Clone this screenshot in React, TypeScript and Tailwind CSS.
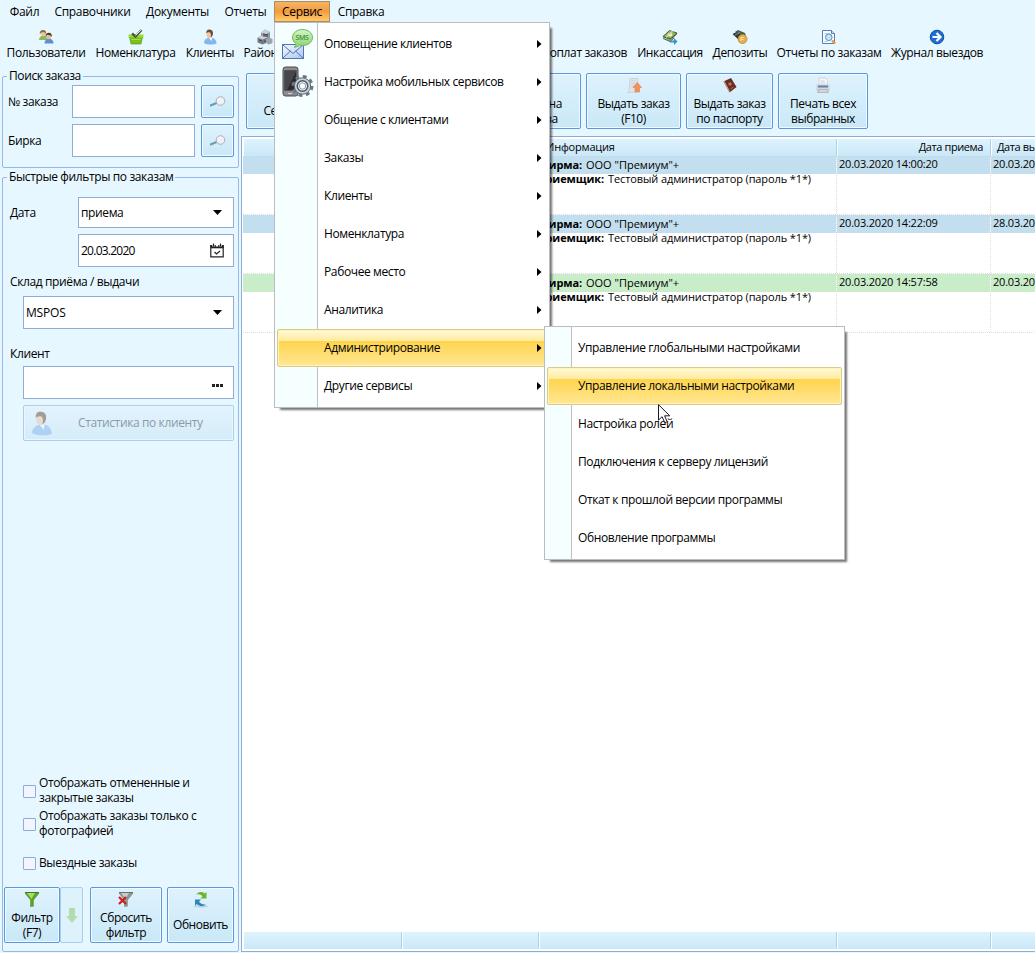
import type { ReactNode } from 'react';
import clsx from 'clsx';

const menuBar = [
  { label: 'Файл', cls: 'w-[45px]' },
  { label: 'Справочники', cls: 'w-[91px]' },
  { label: 'Документы', cls: 'w-[79px]' },
  { label: 'Отчеты', cls: 'w-[57px]' },
  { label: 'Сервис', cls: 'w-14', active: true },
  { label: 'Справка', cls: 'w-[62px]' },
];

const serviceMenu = [
  { label: 'Оповещение клиентов', icon: <SmsIcon /> },
  { label: 'Настройка мобильных сервисов', icon: <PhoneGearIcon /> },
  { label: 'Общение с клиентами' },
  { label: 'Заказы' },
  { label: 'Клиенты' },
  { label: 'Номенклатура' },
  { label: 'Рабочее место' },
  { label: 'Аналитика' },
  { label: 'Администрирование', active: true },
  { label: 'Другие сервисы' },
];

const adminMenu = [
  { label: 'Управление глобальными настройками' },
  { label: 'Управление локальными настройками', active: true },
  { label: 'Настройка ролей' },
  { label: 'Подключения к серверу лицензий' },
  { label: 'Откат к прошлой версии программы' },
  { label: 'Обновление программы' },
];

const orders = [
  { received: '20.03.2020 14:00:20', due: '20.03.2020', tone: 'bg-[#c3deee]' },
  { received: '20.03.2020 14:22:09', due: '28.03.2020', tone: 'bg-[#c3deee]' },
  { received: '20.03.2020 14:57:58', due: '20.03.2020', tone: 'bg-[#c9edc9]' },
];

/* ---------- icons ---------- */

function SmsIcon() {
  return (
    <svg width="32" height="32" viewBox="0 0 32 32">
      <defs>
        <linearGradient id="bubble" x1="0" y1="0" x2="0" y2="1">
          <stop offset="0" stopColor="#d4f5c4" />
          <stop offset="1" stopColor="#86d46c" />
        </linearGradient>
        <linearGradient id="mail" x1="0" y1="0" x2="1" y2="1">
          <stop offset="0" stopColor="#f4f9ff" />
          <stop offset="1" stopColor="#a9c8f0" />
        </linearGradient>
      </defs>
      <rect x="0.5" y="16.5" width="21" height="14" fill="url(#mail)" stroke="#5573b5" />
      <path d="M1 17l10 8.500L21 17M1 30l7.500-7M21 30l-7.500-7" fill="none" stroke="#5573b5" />
      <path d="M20.500 1.500c5.500 0 10 3.500 10 8s-4.500 8-10 8c-1 0-2-.1-3-.4-1.500 1.500-3 2.100-5.500 2.100 1.300-1 1.800-2.300 1.700-3.700-2-1.500-3.200-3.600-3.200-6 0-4.500 4.500-8 10-8z" fill="url(#bubble)" stroke="#68b858" />
      <text x="20" y="12" textAnchor="middle" fontSize="7" fill="#4c8a49" className="font-semibold">SMS</text>
    </svg>
  );
}

function PhoneGearIcon() {
  return (
    <svg width="32" height="32" viewBox="0 0 32 32">
      <rect x="1" y="1" width="15" height="29" rx="2.500" fill="#8d8d90" stroke="#4b4b4d" />
      <rect x="2.500" y="4.500" width="12" height="20" fill="#2b2a2d" />
      <path d="M2.500 4.500h12L5 24.500H2.500z" fill="#47464a" />
      <path d="M6 27.500h4" stroke="#d5d5d8" />
      <circle cx="20.500" cy="20" r="9.300" fill="none" stroke="#6d7884" strokeWidth="3.400" strokeDasharray="3.800 3.504" />
      <circle cx="20.500" cy="20" r="8.200" fill="#c9d1da" stroke="#5d6874" />
      <circle cx="20.500" cy="20" r="5.200" fill="#fafdff" stroke="#4a545f" strokeWidth="1.500" />
      <circle cx="20.500" cy="20" r="3.200" fill="#f6feff" stroke="#8d98a4" />
    </svg>
  );
}

function PersonIcon({ size = 16 }: { size?: number }) {
  return (
    <svg width={size} height={size} viewBox="0 0 16 16">
      <path d="M2 14c0-3 2.500-5 5-5.200l2.500-.3c3 .5 5 3 5 6-2.500 1.500-10 1.500-12.500-.5z" fill="#83b7ee" />
      <path d="M6.500 8.500h3.500l-.5 3.500z" fill="#fff" />
      <ellipse cx="7.500" cy="5.300" rx="3" ry="3.900" fill="#f0c8a3" />
      <path d="M4.300 4.500C4 1.500 5.500.3 7.800.5c2.600.2 3.700 2.300 3 5.200-.5 1.500-1.500 2.500-2.300 2.500C9.300 6.500 9 4.500 8 3.500 6.500 3 5 3.500 4.300 4.500z" fill="#6c4a33" />
    </svg>
  );
}

function UsersIcon() {
  return (
    <svg width="16" height="16" viewBox="0 0 16 16">
      <path d="M1 11c0-3 2-4.500 4.500-4.500S10 8 10 11z" fill="#8db863" />
      <circle cx="5" cy="4.300" r="2.600" fill="#edc79e" />
      <path d="M1.800 5C1.500 2.300 3 1 5.200 1S8.300 2.500 8 5L6.500 3.200H3.400z" fill="#8c6b3b" />
      <path d="M6.500 14.500c0-3 1.800-4.800 4.500-4.800s4.500 1.800 4.500 4.800z" fill="#5d8fcf" />
      <circle cx="10.700" cy="7.500" r="2.700" fill="#e9bc95" />
      <path d="M7.600 7.500C7.300 5 8.800 3.600 11 3.700c2.200.1 3.200 1.700 2.800 4L12 6.200 9.200 5.800z" fill="#4e3c30" />
    </svg>
  );
}

function BasketIcon() {
  return (
    <svg width="16" height="16" viewBox="0 0 16 16">
      <path d="M1.500 8h13L13 15H3z" fill="#7cc01c" stroke="#5b9c15" strokeWidth=".7" />
      <path d="M.5 5.500h15v3H.5z" fill="#9cdc30" />
      <path d="M3.500 10.500h9" stroke="#a5de4d" />
      <path d="M4 4.500l3.500 3L13.500 1" fill="none" stroke="#4c5b3b" strokeWidth="2.400" />
      <path d="M7.500 6.500l5.500-5.500" stroke="#dfe9e0" strokeWidth="1" />
    </svg>
  );
}

function BuildingIcon() {
  return (
    <svg width="16" height="16" viewBox="0 0 16 16">
      <path d="M4 4l4-3.500 5 2.500v8l-9 2z" fill="#8f969e" />
      <path d="M4 4l4-3.500 5 2.500-4 2z" fill="#c9ced4" />
      <path d="M.5 8.500l5-2 5 2v5l-5 2-5-2z" fill="#747c86" />
      <path d="M.5 8.500l5-2 5 2-5 2z" fill="#cdd3da" />
      <path d="M9 10l3-1.500 3.500 1.500v4L12 15.500 9 14z" fill="#9ba3ac" />
      <path d="M6 5l5 1M2 11l3 1M7 12.500l2-.7M6 7h5" stroke="#3f464e" />
    </svg>
  );
}

function CashIcon() {
  return (
    <svg width="16" height="16" viewBox="0 0 16 16">
      <path d="M.5 8L7 2l8.500 2.500L9 11z" fill="#39492f" />
      <path d="M1 9.500l7 3 4-3.500M1 7.500L7.500 1.500 15 4 8.500 10z" fill="#8fb46b" stroke="#3d5230" strokeWidth=".8" />
      <ellipse cx="8" cy="5.800" rx="2.400" ry="1.700" fill="#e9f3d4" />
      <path d="M4 8.300l6.500-6" stroke="#e3d68f" strokeWidth="1.500" />
      <path d="M8 11.500h4V9l3.500 3.500L12 16v-2.500H8z" fill="#3f90d0" />
    </svg>
  );
}

function DepositIcon() {
  return (
    <svg width="16" height="16" viewBox="0 0 16 16">
      <path d="M.5 5l6-3 6.500 4-4 7z" fill="#2f3733" />
      <path d="M3 3l3-2 7 3 1 3z" fill="#4c5c4a" />
      <path d="M3 6l5-2.500" stroke="#8ba27f" />
      <circle cx="10.500" cy="10" r="4.500" fill="#e3b04d" stroke="#b98732" strokeWidth=".8" />
      <path d="M9 12V8.500h3M9 10.500h2.500" fill="none" stroke="#fbe5a4" />
    </svg>
  );
}

function ReportIcon() {
  return (
    <svg width="16" height="16" viewBox="0 0 16 16">
      <path d="M1.500 1.500h9l3 3v10h-12z" fill="#f7fbff" stroke="#5b7cb0" />
      <path d="M10.500 1.500v3h3" fill="#cfdff3" stroke="#5b7cb0" />
      <path d="M3.500 4.500h5M3.500 12.500h3" stroke="#b8cbe4" />
      <circle cx="7.800" cy="8.300" r="3.300" fill="#bfe5f8" stroke="#5d90bb" />
      <path d="M11 11.500l3 3" stroke="#e9924a" strokeWidth="2.400" />
    </svg>
  );
}

function BlueArrowIcon() {
  return (
    <svg width="16" height="16" viewBox="0 0 16 16">
      <circle cx="8" cy="8" r="6.800" fill="#1f6fd2" stroke="#0b4da2" />
      <path d="M3.500 8h8M7.500 4l4 4-4 4" fill="none" stroke="#fff" strokeWidth="2.200" />
    </svg>
  );
}

function GiveOrderIcon() {
  return (
    <svg width="16" height="17" viewBox="0 0 16 17">
      <path d="M4 1.500h8L11 13c-.3 2-1.500 2.500-3 2.500H1.500C3 15 3.200 13 3.300 11z" fill="#dde5ea" stroke="#c2cfd6" strokeWidth=".8" />
      <path d="M5.500 4h4M5.200 6.500h4M5 9h3" stroke="#c9d3da" />
      <path d="M9 15V10.500H7L11.300 5.500 15.500 10.500h-2V15z" fill="#f3925f" stroke="#e27945" strokeWidth=".6" />
    </svg>
  );
}

function PassportIcon() {
  return (
    <svg width="16" height="17" viewBox="0 0 16 17">
      <path d="M1.500 4.500L9 1l5.500 9L7.500 15.500z" fill="#6b2a23" />
      <path d="M1.500 4.500L7.500 15.500l.3-1.500L2.500 4z" fill="#c9a89f" />
      <circle cx="8" cy="7" r="1.800" fill="#b07a4c" />
      <path d="M8.500 12l3-2" stroke="#b07a4c" />
    </svg>
  );
}

function PrinterIcon() {
  return (
    <svg width="16" height="17" viewBox="0 0 16 17">
      <path d="M4 1h6l2.500 2.500V8H4z" fill="#f4f6f8" stroke="#c8d0d7" strokeWidth=".8" />
      <path d="M5.500 4h4M5.500 6h5" stroke="#cfd6dc" />
      <rect x="1" y="7.500" width="14" height="6" rx="1" fill="#d4d8de" />
      <path d="M3 8.500h10v2H3z" fill="#5e83b0" />
      <path d="M3 12h10l.8 4H2.200z" fill="#b4b9c0" />
      <path d="M4 14h8" stroke="#f0f2f4" />
    </svg>
  );
}

function LensIcon() {
  return (
    <svg width="16" height="11" viewBox="0 0 16 11">
      <path d="M.5 9.500l5.500-2.200" stroke="#6a9bb8" strokeWidth="2" strokeLinecap="round" />
      <circle cx="10.500" cy="5" r="4.300" fill="#eef0fa" stroke="#b0adb9" />
      <path d="M8 4.500c.5-1.500 2-2 3.300-1.600" fill="none" stroke="#fff" />
    </svg>
  );
}

function FunnelIcon({ off = false }: { off?: boolean }) {
  return (
    <svg width="16" height="17" viewBox="0 0 16 17">
      <path d="M1 1h14v1.800L9.800 9v6.500L6.200 16V9L1 2.800z" fill={off ? '#8b9590' : '#5ea02c'} />
      <path d="M3 2h8L7.500 8z" fill={off ? '#c5cdc9' : '#a7dc6a'} />
      <path d="M1 1h14v1H1z" fill={off ? '#67706b' : '#3f7a1b'} />
      {off ? <path d="M1 6l7 7M8 6l-7 7" stroke="#cf1c20" strokeWidth="2.200" /> : null}
    </svg>
  );
}

function RefreshIcon() {
  return (
    <svg width="16" height="17" viewBox="0 0 16 17">
      <ellipse cx="8" cy="15.500" rx="7.500" ry="1" fill="#c2d3dc" />
      <path d="M3 3.500C5.500.5 9 .3 11.500 2.500L13.500 1v6.500H7.500L9.500 5.200C7.500 3.300 5 3 3 3.500z" fill="#6fb52c" />
      <path d="M2 8.500h6L6 10.700c1.700 2 4 2.800 7 2.800-2.800 2.500-6.500 2-9.200-.5L2 15z" fill="#2f86b4" />
    </svg>
  );
}

function CalendarIcon() {
  return (
    <svg width="14" height="15" viewBox="0 0 14 15">
      <path d="M.8 2.500h12.400v11.400H.8z" fill="none" stroke="#222" strokeWidth="1.200" />
      <path d="M.5 2h13v3.300H.5z" fill="#222" />
      <path d="M3.500 0v3.500M7 0v3.500M10.500 0v3.500" stroke="#fff" strokeWidth="2.400" />
      <path d="M3.500 .5v3M10.500 .5v3" stroke="#222" strokeWidth="1.200" />
      <path d="M4.500 9l2 2 3.500-3" fill="none" stroke="#222" strokeWidth="1.200" />
    </svg>
  );
}

function CaretDown() {
  return (
    <svg width="9" height="5" viewBox="0 0 9 5">
      <path d="M0 0h9L4.500 5z" fill="#000" />
    </svg>
  );
}

/* ---------- building blocks ---------- */

function ToolItem({ icon, label, cls }: { icon?: ReactNode; label: string; cls: string }) {
  return (
    <div className={clsx('flex shrink-0 flex-col items-center', cls)}>
      <span className="flex h-4 items-center">{icon}</span>
      <span className="h-4 leading-4">{label}</span>
    </div>
  );
}

function PushButton({ icon, lines, cls }: { icon?: ReactNode; lines: string[]; cls: string }) {
  return (
    <button
      className={clsx(
        'flex h-14 shrink-0 flex-col items-center rounded-[2px] border border-[#5b98dc] bg-linear-to-b from-[#dff2fe] to-[#c9e8f7] pt-[3px] tracking-[-0.45px] shadow-[inset_0_0_0_1px_#f0faff]',
        cls,
      )}
    >
      <span className="flex h-[17px]">{icon}</span>
      <span className="flex h-[33px] flex-col justify-center leading-[15px]">
        {lines.map((l) => (
          <span key={l}>{l}</span>
        ))}
      </span>
    </button>
  );
}

function Group({ title, cls, children }: { title: string; cls: string; children: ReactNode }) {
  return (
    <section className={clsx('relative rounded-[2px] border border-[#94b9ea]', cls)}>
      <h2 className="absolute -top-[9px] left-1 bg-[#e7f7ff] px-0.5 leading-4 whitespace-nowrap">{title}</h2>
      {children}
    </section>
  );
}

function SearchRow({ label }: { label: string }) {
  return (
    <div className="flex items-center">
      <span className="w-16 shrink-0">{label}</span>
      <span className="h-[33px] w-[123px] border border-[#8facd9] bg-white" />
      <button className="ml-1.5 grid h-[33px] w-[33px] place-items-center rounded-[2px] border border-[#5b98dc] bg-linear-to-b from-[#dff2fe] to-[#c9e8f7] shadow-[inset_0_0_0_1px_#f0faff]">
        <LensIcon />
      </button>
    </div>
  );
}

function Field({ value, icon, cls }: { value?: string; icon: ReactNode; cls: string }) {
  return (
    <div className={clsx('flex items-center justify-between border border-[#8facd9] bg-white pl-0.5', cls)}>
      <span>{value}</span>
      {icon}
    </div>
  );
}

function Check({ lines, cls }: { lines: string[]; cls?: string }) {
  return (
    <label className={clsx('flex items-center gap-[3px]', cls)}>
      <span className="h-[13px] w-[13px] shrink-0 rounded-[1px] border border-[#8facd9] bg-[#f2f5ff]" />
      <span className="-mt-px mb-px flex flex-col leading-[15px]">
        {lines.map((l) => (
          <span key={l}>{l}</span>
        ))}
      </span>
    </label>
  );
}

type Entry = { label: string; icon?: ReactNode; active?: boolean };

function PopupMenu({ items, cls, gutter, arrows }: { items: Entry[]; cls: string; gutter: string; arrows?: boolean }) {
  return (
    <ul
      className={clsx(
        'absolute border border-[#bcbcbc] bg-white py-0.5 shadow-[4px_4px_2px_-2px_rgba(0,0,0,0.55)]',
        cls,
      )}
    >
      <li aria-hidden="true" className={clsx('absolute inset-y-0 left-0 border-r border-[#c0c0c0] bg-[#f5ffff]', gutter)} />
      {items.map((m) => (
        <li
          key={m.label}
          className={clsx(
            'relative mx-0.5 flex h-[38px] items-center rounded-[2px] border',
            m.active
              ? 'border-[#d9c98c] bg-[linear-gradient(180deg,#fffbd8_0%,#ffeaa0_30%,#ffd44d_31%,#ffe793_100%)] shadow-[inset_0_0_0_1px_#fff3b8]'
              : 'border-transparent',
          )}
        >
          <span className={clsx('shrink-0', arrows ? 'flex w-[46px] pl-1' : 'w-[30px]')}>{m.icon}</span>
          <span className="flex-1 whitespace-nowrap">{m.label}</span>
          {arrows ? (
            <svg width="5" height="8" viewBox="0 0 5 8" className="mr-1">
              <path d="M0 0v8l4.500-4z" fill="#000" />
            </svg>
          ) : null}
        </li>
      ))}
    </ul>
  );
}

/* ---------- page parts ---------- */

function Sidebar() {
  return (
    <aside className="flex w-[241px] shrink-0 flex-col pt-[7px] pl-[2px]">
      <Group title="Поиск заказа" cls="h-[92px] w-[237px] pt-2 pl-[5px]">
        <div className="flex flex-col gap-1.5">
          <SearchRow label="№ заказа" />
          <SearchRow label="Бирка" />
        </div>
      </Group>

      <Group title="Быстрые фильтры по заказам" cls="mt-[9px] flex h-[775px] w-[237px] flex-col">
        <div className="mt-[19px] flex items-center pl-[7px]">
          <span className="w-[68px]">Дата</span>
          <Field value="приема" cls="h-[31px] w-[156px] pr-[11px]" icon={<CaretDown />} />
        </div>
        <Field value="20.03.2020" cls="mt-1.5 ml-[75px] h-[33px] w-[156px] pr-[9px] tracking-[-0.75px]" icon={<CalendarIcon />} />
        <p className="mt-[7px] pl-[7px] leading-4">Склад приёма / выдачи</p>
        <Field value="MSPOS" cls="mt-1.5 ml-5 h-[33px] w-[211px] pr-[11px] tracking-[-0.2px]" icon={<CaretDown />} />
        <p className="mt-[17px] pl-[7px] leading-4">Клиент</p>
        <Field
          cls="mt-1 ml-5 h-[33px] w-[211px] pr-[10px]"
          icon={
            <svg width="11" height="3" viewBox="0 0 11 3" className="mt-[5px]">
              <path d="M0 0h3v3H0zM4 0h3v3H4zM8 0h3v3H8z" fill="#222" />
            </svg>
          }
        />
        <button className="mt-1.5 ml-5 flex h-9 w-[211px] items-center rounded-[2px] border border-[#aaceef] bg-linear-to-b from-[#e2f3fd] to-[#d5ecf9] pl-[5px] text-[#8b9ba6] shadow-[inset_0_0_0_1px_#eaf7fe]">
          <span className="opacity-50">
            <PersonIcon size={25} />
          </span>
          <span className="ml-6">Статистика по клиенту</span>
        </button>

        <div className="mt-auto flex flex-col pl-5">
          <Check lines={['Отображать отмененные и', 'закрытые заказы']} />
          <Check cls="mt-[3px]" lines={['Отображать заказы только с', 'фотографией']} />
          <Check cls="mt-[17px]" lines={['Выездные заказы']} />
        </div>
        <div className="mt-4 mb-2 flex pl-px">
          <PushButton cls="w-14" icon={<FunnelIcon />} lines={['Фильтр', '(F7)']} />
          <button className="grid h-14 w-[23px] place-items-center rounded-[2px] border border-[#aaceef] bg-[#def2fc]">
            <svg width="12" height="15" viewBox="0 0 12 15">
              <path d="M3 0h6v8h3l-6 7-6-7h3z" fill="#b2dcb0" />
            </svg>
          </button>
          <PushButton cls="ml-[7px] w-[72px]" icon={<FunnelIcon off />} lines={['Сбросить', 'фильтр']} />
          <PushButton cls="ml-[5px] w-[67px]" icon={<RefreshIcon />} lines={['Обновить']} />
        </div>
      </Group>
    </aside>
  );
}

function OrdersGrid() {
  const headCell = 'shrink-0 border-r border-[#a9d3e8] bg-linear-to-b from-[#dff3ff] to-[#c9e8f8]';
  return (
    <div className="flex h-[816px] w-[800px] flex-col border border-[#8facd9] bg-white pt-0.5 pl-px text-[11px] tracking-[-0.11px]">
      <div className="ml-px flex h-[17px] leading-[15px] tracking-[-0.4px]">
        <div className={clsx(headCell, 'w-[593px] pl-[302px] tracking-[-0.2px]')}>Информация</div>
        <div className={clsx(headCell, 'w-[154px] border-l border-l-white pr-[7px] text-right')}>Дата приема</div>
        <div className={clsx(headCell, 'w-[120px] border-l border-l-white pl-[5px] whitespace-nowrap')}>Дата выдачи</div>
      </div>
      {orders.map((o) => (
        <div key={o.received} className="flex h-[59px] border-b border-dotted border-[#dcdcdc]">
          <div className="w-[594px] shrink-0 border-r border-dotted border-[#dcdcdc]">
            <p className={clsx('flex h-[18px] leading-[18px]', o.tone)}>
              <b className="w-[339px] text-right">Фирма:</b>
              <span className="ml-1 tracking-normal">ООО "Премиум"+</span>
            </p>
            <p className="-mt-px flex h-3 leading-3">
              <b className="w-[361px] text-right">Приемщик:</b>
              <span className="ml-1">Тестовый администратор (пароль *1*)</span>
            </p>
          </div>
          <div className="w-[154px] shrink-0 border-r border-dotted border-[#dcdcdc]">
            <p className={clsx('h-[18px] pl-0.5 leading-[15px] tracking-[-0.2px]', o.tone)}>{o.received}</p>
          </div>
          <div className="w-[120px] shrink-0">
            <p className={clsx('h-[18px] pl-0.5 leading-[15px] tracking-[-0.2px]', o.tone)}>{o.due}</p>
          </div>
        </div>
      ))}
      <div className="mt-auto mb-0.5 ml-px flex h-[17px]">
        <div className={clsx(headCell, 'w-[158px]')} />
        <div className={clsx(headCell, 'w-[137px] border-l border-l-white')} />
        <div className={clsx(headCell, 'w-[298px] border-l border-l-white')} />
        <div className={clsx(headCell, 'w-[154px] border-l border-l-white')} />
        <div className={clsx(headCell, 'w-[120px] border-l border-l-white')} />
      </div>
    </div>
  );
}

export default function App() {
  return (
    <div className="relative flex h-[953px] w-[1035px] flex-col overflow-hidden bg-[#e7f7ff] font-['Open_Sans',sans-serif] text-[12px] leading-4 tracking-[-0.38px] text-black">
      <nav className="flex h-[23px] pt-px pl-[2px] tracking-[-0.3px]">
        {menuBar.map((m) => (
          <span
            key={m.label}
            className={clsx(
              'flex h-[21px] items-center justify-center border',
              m.cls,
              m.active ? 'border-[#a98f63] bg-linear-to-b from-[#f5b562] via-[#f39b3d] to-[#ffcb6b]' : 'border-transparent',
            )}
          >
            {m.label}
          </span>
        ))}
      </nav>

      <div className="flex h-[46px] gap-[10px] pt-1.5 pl-[7px] whitespace-nowrap">
        <ToolItem cls="w-[78px]" icon={<UsersIcon />} label="Пользователи" />
        <ToolItem cls="w-[81px]" icon={<BasketIcon />} label="Номенклатура" />
        <ToolItem cls="w-12" icon={<PersonIcon />} label="Клиенты" />
        <ToolItem cls="w-[42px]" icon={<BuildingIcon />} label="Районы" />
        <ToolItem cls="w-[331px] items-end!" label="оплат заказов" />
        <ToolItem cls="w-[66px]" icon={<CashIcon />} label="Инкассация" />
        <ToolItem cls="w-[54px]" icon={<DepositIcon />} label="Депозиты" />
        <ToolItem cls="w-[104px]" icon={<ReportIcon />} label="Отчеты по заказам" />
        <ToolItem cls="w-[92px]" icon={<BlueArrowIcon />} label="Журнал выездов" />
      </div>

      <div className="flex flex-1">
        <Sidebar />
        <main className="flex w-[794px] shrink-0 flex-col">
          <div className="flex h-[67px] pt-1 pl-[5px]">
            <PushButton cls="w-[83px]" lines={['Сервисы']} />
            <PushButton cls="ml-[157px] w-[95px]" lines={['Замена на', 'качества']} />
            <PushButton cls="ml-[5px] w-[95px]" icon={<GiveOrderIcon />} lines={['Выдать заказ', '(F10)']} />
            <PushButton cls="ml-[5px] w-[87px]" icon={<PassportIcon />} lines={['Выдать заказ', 'по паспорту']} />
            <PushButton cls="ml-[5px] w-[90px]" icon={<PrinterIcon />} lines={['Печать всех', 'выбранных']} />
          </div>
          <OrdersGrid />
        </main>
      </div>

      <PopupMenu items={serviceMenu} cls="top-[22px] left-[274px] w-[276px]" gutter="w-[43px]" arrows />
      <PopupMenu items={adminMenu} cls="top-[326px] left-[544px] w-[301px]" gutter="w-[27px]" />

      <svg width="13" height="20" viewBox="0 0 13 20" className="absolute top-[404px] left-[658px]">
        <path d="M.5.700v15.500l3.600-3.500 2.700 6 2.400-1-2.600-5.900h5.200z" fill="#fff" stroke="#1a1a2a" />
      </svg>
    </div>
  );
}
